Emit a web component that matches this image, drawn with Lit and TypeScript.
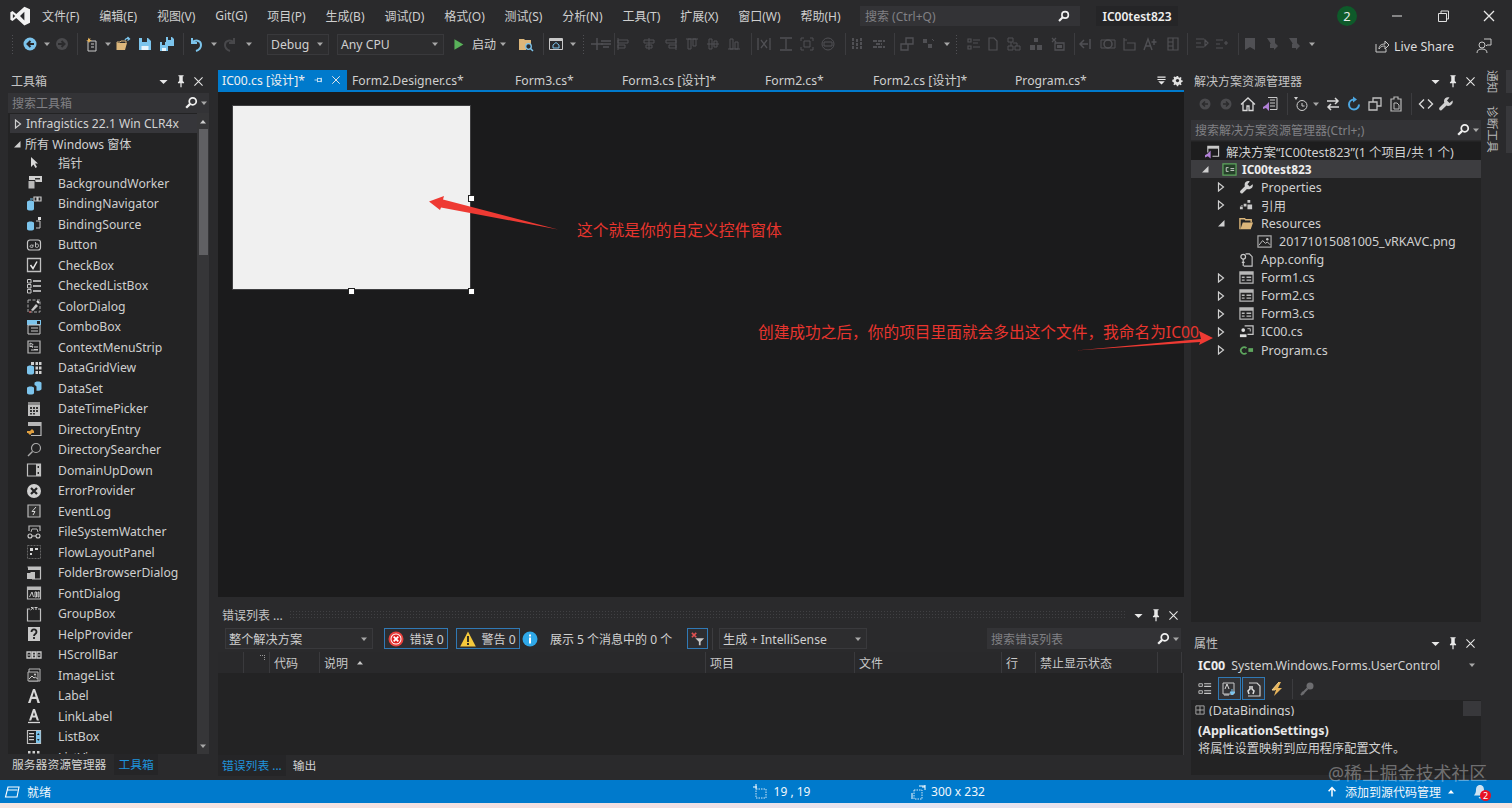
import { LitElement, html, css, svg } from "lit";
import { customElement } from "lit/decorators.js";

const G = "#c8c8c8";
const D = "#505054";
const B = "#7cc4ec";
const icons: Record<string, any> = {
  logo: svg`<path fill-rule="evenodd" fill="#f2f2f2" d="M11.5.5 16 2.6v10.8L11.5 15.5 5 9.6 2 12 .3 11V5l1.7-1 3 2.400zM11.500 4.500 8 8l3.500 3.500zM2.300 6.300v3.400L4.200 8z"/>`,
  back: svg`<circle cx="8" cy="8" r="6.500" fill="${B}"/><path d="M12 8H6M8.500 5 5.500 8l3 3" stroke="#26262a" stroke-width="2" fill="none"/>`,
  fwd: svg`<circle cx="8" cy="8" r="6" fill="#4a4a4d"/><path d="M4 8h6M7.500 5l3 3-3 3" stroke="#2b2b2d" stroke-width="2" fill="none"/>`,
  newp: svg`<path d="M4 5h8v10H4z" fill="none" stroke="${G}"/><path d="M4 1.500 5 3l1.500-1L6 4 8 4.500 6 5 5 7 4 5 2 4.500 4 4z" fill="#e8b45a"/><path d="M7 8h3M7 11h3" stroke="${G}"/>`,
  open: svg`<path d="M1 7h10l-2 7H1z" fill="#dcb67a"/><path d="M1 14V6h3l1-1h5v2" fill="none" stroke="#dcb67a"/><path d="M9 4c1-2 3-2 4-1M11.500 1 13.500 3l-2 1.500" stroke="${B}" stroke-width="1.300" fill="none"/>`,
  save: svg`<path d="M2 2h9l3 3v9H2z" fill="${B}"/><path d="M5 2h5v4H5z" fill="#2b2b2d"/><path d="M4.500 10h7v4h-7z" fill="#e8f4fb"/>`,
  saveall: svg`<path d="M7 1h6l2 2v7H7z" fill="${B}"/><path d="M9 1h3v3H9z" fill="#2b2b2d"/><path d="M1 6h6l2 2v7H1z" fill="${B}"/><path d="M3 6h3v3H3z" fill="#2b2b2d"/><path d="M3 12h4v3H3z" fill="#e8f4fb"/>`,
  undo: svg`<path d="M4 2v5h5M4.500 6.500C7 3.500 13 4 13 9c0 3-2 5-5 6" fill="none" stroke="${B}" stroke-width="2"/>`,
  redo: svg`<path d="M12 2v5H7M11.500 6.500C9 3.500 3 4 3 9c0 3 2 5 5 6" fill="none" stroke="#48484b" stroke-width="2"/>`,
  play: svg`<path d="M3 1.500 14 8 3 14.500z" fill="#59b25a"/>`,
  folderfind: svg`<path d="M1 3h5l1 1h6v6H8v4H1z" fill="#dcb67a"/><circle cx="10.500" cy="10.500" r="2.800" fill="#2b2b2d" stroke="${B}" stroke-width="1.300"/><path d="m12.500 12.500 2.500 2.500" stroke="${B}" stroke-width="1.500"/>`,
  browser: svg`<path d="M1.500 2.500h13v11h-13z" fill="none" stroke="${G}"/><path d="M2 3h12v2H2z" fill="${G}"/><path d="M8 6.500 5 9v3h6V9z" fill="none" stroke="${B}"/>`,
  mag: svg`<circle cx="10" cy="6" r="4" fill="none" stroke="#f0f0f0" stroke-width="2"/><path d="M7 9 2.500 13.500" stroke="#f0f0f0" stroke-width="2.600"/>`,
  share: svg`<path d="M2 6v8h10v-3" fill="none" stroke="${G}"/><path d="M5 11c0-4 3-5 6-5V3l4 4-4 4V8c-2 0-4 0-6 3z" fill="none" stroke="${G}"/>`,
  feedback: svg`<circle cx="6" cy="7" r="3" fill="none" stroke="${G}"/><path d="M1 15c0-3 2-4 5-4s5 1 5 4" fill="none" stroke="${G}"/><path d="M8 1h7v6h-4l-1 1" fill="none" stroke="${G}"/>`,
  pin: svg`<path d="M5 1.500h6v1h-1v5.500l1.500 1.500v1H8.700V15h-1.400v-4.500H4.500v-1L6 8V2.500H5z" fill="#e8e8e8"/>`,
  pinh: svg`<path d="M2 8h4M6 5v6M6 6h5v4H6M11 5v6" fill="none" stroke="#e8f4fb"/>`,
  x: svg`<path d="m3 3 10 10M13 3 3 13" stroke="#e8e8e8" stroke-width="1.300" fill="none"/>`,
  down: svg`<path d="M3 6h10L8 11z" fill="#e8e8e8"/>`,
  gear: svg`<path d="M7 1h2l.5 2 1.700.700 1.800-1 1.300 1.300-1 1.800.7 1.700 2 .5v2l-2 .5-.7 1.700 1 1.800-1.300 1.300-1.800-1-1.700.7-.5 2H7l-.5-2-1.700-.7-1.800 1-1.300-1.300 1-1.800-.7-1.700-2-.5V7l2-.5.7-1.700-1-1.800L3 1.700l1.800 1 1.700-.7z" transform="translate(1.600 1.600) scale(.8)" fill="#e0e0e0"/><circle cx="8" cy="8" r="2" fill="#2b2b2d"/>`,
  listdown: svg`<path d="M3 3h10v1.500H3zM3 6h10v1.500H3zM4 9h8l-4 4z" fill="#e8e8e8"/>`,
  d0: svg`<path d="M8 2v12M2 8h12" fill="none" stroke="${D}" stroke-width="1.400"/>`,
  d00: svg`<path d="M3 5h10M3 8h10M5 11h6" fill="none" stroke="${D}" stroke-width="1.400"/>`,
  d1: svg`<path d="M3 2v12M3 4h10v3H3zM3 9h7v3H3z" fill="none" stroke="${D}"/>`,
  d2: svg`<path d="M8 2v12M3 4h10v3H3zM5 9h6v3H5z" fill="none" stroke="${D}"/>`,
  d3: svg`<path d="M13 2v12M3 4h10v3H3zM6 9h7v3H6z" fill="none" stroke="${D}"/>`,
  d4: svg`<path d="M2 3h12M4 3v10h3V3zM9 3v7h3V3z" fill="none" stroke="${D}"/>`,
  d5: svg`<path d="M2 8h12M4 3v10h3V3zM9 5v6h3V5z" fill="none" stroke="${D}"/>`,
  d6: svg`<path d="M2 13h12M4 3v10h3V3zM9 6v7h3V6z" fill="none" stroke="${D}"/>`,
  d7: svg`<path d="M2 2v12M14 2v12M5 4l6 8M11 4l-6 8" fill="none" stroke="${D}" stroke-width="1.300"/>`,
  d8: svg`<path d="M2 2h12M2 14h12M8 3v10" fill="none" stroke="${D}" stroke-width="1.300"/>`,
  d9: svg`<path d="M2 2h3M11 2h3M2 14h3M11 14h3M2 2v3M14 2v3M2 11v3M14 11v3M5 5h6v6H5z" fill="none" stroke="${D}"/>`,
  d10: svg`<circle cx="8" cy="8" r="6" fill="none" stroke="${D}"/><path d="M4 6h8v4H4z" fill="none" stroke="${D}"/>`,
  d11: svg`<path d="M4 2v12M12 2v12M8 3v10" fill="none" stroke="${D}" stroke-width="2" stroke-dasharray="3 1"/>`,
  d12: svg`<path d="M2 5h12M2 11h12M5 8h6" fill="none" stroke="${D}" stroke-width="2" stroke-dasharray="4 1"/>`,
  d13: svg`<path d="M2 8h7v6H2zM7 2h7v6H7z" fill="none" stroke="${D}" stroke-width="1.400"/>`,
  d14: svg`<path d="M3 3h4v4H3zM8 8h4v4H8z" fill="${D}"/><path d="M12 3l2 2" stroke="${D}"/>`,
  d15: svg`<path d="M2 3h3v3H2zM2 10h3v3H2zM7 4h7M7 11h7M7 7h5" fill="none" stroke="${D}" stroke-width="1.200"/>`,
  d16: svg`<path d="M4 2h5l3 3v9H4z" fill="none" stroke="${D}" stroke-width="1.200"/>`,
  d17: svg`<path d="M2 2h5v4H2zM9 10h5v4H9zM2 10h5v4H2zM5 6v4M11 10V7H7" fill="none" stroke="${D}"/>`,
  d18: svg`<path d="M2 9h5v5H2zM9 9h5v5H9zM6 2h4v4H6z" fill="${D}"/>`,
  d19: svg`<path d="M2 2l4 4M6 2 2 6M5 7h9v7H5z" fill="none" stroke="${D}" stroke-width="1.300"/><path d="M7 9h5v3H7z" fill="${D}"/>`,
  d20: svg`<path d="M2 8h8M6 4 2 8l4 4M12 3v10" fill="none" stroke="${D}" stroke-width="1.500"/>`,
  d21: svg`<circle cx="8" cy="8" r="4" fill="none" stroke="${D}" stroke-width="1.500"/><path d="M1 4h14v8H1z" fill="none" stroke="${D}"/>`,
  d22: svg`<path d="M3 2v12h11V7H6M3 4h3" fill="none" stroke="${D}" stroke-width="1.200"/>`,
  d23: svg`<path d="M1 14 5 3l4 11M3 10h4" fill="none" stroke="${D}" stroke-width="1.400"/><path d="M11 3v6M8.500 6h5" stroke="${D}" stroke-width="1.400"/>`,
  d24: svg`<path d="M3 2h10v12H3zM8 2v12M3 6h5M3 10h5" fill="none" stroke="${D}" stroke-width="1.200"/>`,
  d25: svg`<path d="M2 3h8M2 7h5M2 11h8M11 4l3 3-3 3z" fill="none" stroke="${D}" stroke-width="1.200"/>`,
  d26: svg`<path d="M2 4h7M2 8h4M2 12h7M10 7h4M12 5v4" fill="none" stroke="${D}" stroke-width="1.200"/>`,
  d27: svg`<path d="M3 2h10v12l-5-3-5 3z" fill="${D}"/>`,
  d28: svg`<path d="M2 2h8v6l-2-1-2 1M9 6l4 4-4 4v-2H5V8" fill="${D}"/>`,
  sback: svg`<circle cx="8" cy="8" r="5.500" fill="#4a4a4d"/><path d="M11 8H6M8 5.500 5.500 8 8 10.500" stroke="#2b2b2d" stroke-width="1.500" fill="none"/>`,
  sfwd: svg`<circle cx="8" cy="8" r="5.500" fill="#4a4a4d"/><path d="M5 8h5M8 5.500l2.500 2.500L8 10.500" stroke="#2b2b2d" stroke-width="1.500" fill="none"/>`,
  home: svg`<path d="M1 8.500 8 2l7 6.500M3 7v7.500h4V10h2v4.500h4V7" fill="none" stroke="#d8d8d8" stroke-width="1.300"/>`,
  vsdoc: svg`<path d="M6 1.500h9v12H8" fill="none" stroke="${G}"/><path d="M8 4h5M8 7h5M8 10h5" stroke="${G}"/><path d="M1 11l3-2 3-3v9l-3-3-3 1z" fill="#b180d7"/>`,
  clock: svg`<circle cx="9" cy="9.500" r="5" fill="none" stroke="#d0d0d0"/><path d="M9 7v3h2.500" fill="none" stroke="#d0d0d0"/><path d="M1 1h4L3 4z" fill="#d0d0d0"/>`,
  sync: svg`<path d="M2 5h11M10 2l3 3-3 3M14 11H3M6 8l-3 3 3 3" fill="none" stroke="#d8d8d8" stroke-width="1.500"/>`,
  refresh: svg`<path d="M13 8.500A5 5 0 1 1 8 3.500" fill="none" stroke="#4da6e0" stroke-width="2"/><path d="M7 .5v6l4-3z" fill="#4da6e0"/>`,
  collapse: svg`<path d="M2 6h8v8H2z" fill="none" stroke="#c0c0c0" stroke-width="1.300"/><path d="M6 6V2h8v8h-4" fill="none" stroke="#c0c0c0" stroke-width="1.300"/>`,
  pending: svg`<path d="M3 3h3V1h4v2h3v12H3z" fill="none" stroke="#b8b8b8" stroke-width="1.200"/><path d="M6 7h3l2 2v4H6z" fill="none" stroke="#b8b8b8"/>`,
  code: svg`<path d="M6 3.500 1.500 8 6 12.500M10 3.500 14.500 8 10 12.500" fill="none" stroke="#d8d8d8" stroke-width="1.400"/>`,
  wrench: svg`<path d="M14.500 4.500 11.500 7 9 4.500l2.500-3C9 .5 6 2 6 5c0 .7.100 1.200.3 1.700L1.500 11.500c-1 1 0 3 1.500 3l.5-.2 5-4.700c.5.200 1 .3 1.500.3 3.500 0 5.500-3 4.500-5.400z" fill="#d0d0d0"/>`,
  sol: svg`<path d="M3 9V2.500h11.500V13H8" fill="none" stroke="${G}" stroke-width="1.200"/><path d="M3 3h11v2H3z" fill="${G}"/><path d="M0 12l3-2 3-3v8.500l-3-2.500-3 1.500z" fill="#b180d7"/>`,
  csproj: svg`<path d="M1 2h14v12H1z" fill="#26402a" stroke="#5ea65e" stroke-width="1.300"/><path d="M7 6H4.500v4H7" fill="none" stroke="#d0d0d0"/><path d="M9 7h4M9 9h4" stroke="#d0d0d0"/>`,
  refs: svg`<path d="M9 2h3v3H9zM5 6h3v3H5zM9 7h5v5H9zM1 9h3v3H1z" fill="#c8c8c8"/><path d="M2 8h2" stroke="#888"/>`,
  folderopen: svg`<path d="M1 14V3h5l1 1h6v3" fill="none" stroke="#dcb67a" stroke-width="1.500"/><path d="M1.500 14 4 7h11l-2.500 7z" fill="#dcb67a"/>`,
  img: svg`<path d="M1 2h14v12H1z" fill="none" stroke="#a8a8a8" stroke-width="1.300"/><circle cx="11" cy="5.500" r="1.300" fill="#c8c8c8"/><path d="m2 12 4-5 3 3 2-1.500 3 3" fill="none" stroke="#c8c8c8"/>`,
  config: svg`<path d="M7 2h4l3 3v10H5" fill="none" stroke="#c8c8c8" stroke-width="1.200"/><circle cx="4.500" cy="5" r="2.500" fill="none" stroke="#c8c8c8" stroke-width="1.300"/><path d="M4.500 7.500V15M3 11h3" stroke="#c8c8c8" stroke-width="1.300"/>`,
  form: svg`<path d="M1 2h14v12H1z" fill="none" stroke="#b8b8b8" stroke-width="1.300"/><path d="M1 2h14v3H1zM3 7h3v1.500H3zM3 10h3v1.500H3zM8 7h5v1.500H8zM8 10h5v1.500H8z" fill="#b8b8b8"/>`,
  uc: svg`<path d="M6 2h9v9H9" fill="none" stroke="#c8c8c8" stroke-width="1.300"/><circle cx="4.500" cy="6.500" r="2" fill="#e0e0e0"/><path d="M1 14v-3h7v3z" fill="#e0e0e0"/><path d="M9 5h3v3" fill="none" stroke="#c8c8c8"/>`,
  csfile: svg`<path d="M8 5.500a3.500 3.500 0 1 0 0 5" fill="none" stroke="#5ea65e" stroke-width="1.800"/><path d="M10 5.500h5v4h-5z" fill="#5ea65e"/>`,
  tpointer: svg`<path d="M5 2v10l2.500-2.500L9.500 13l1.500-1-2-3.500H12z" fill="#d8d8d8"/>`,
  tbg: svg`<path d="M3 1h13v6H3z" fill="#d0d0d0"/><path d="M9 3h5v1.500H9z" fill="#333"/><path d="M2 5.500h7V14H2z" fill="#b8b8b8" stroke="#232324"/>`,
  tbn: svg`<path d="M8 1h3v4H8zM12 1h3v4h-3z" fill="none" stroke="#c8c8c8" stroke-width="1.200"/><path d="M1 6c0-2 7-2 7 0v7c0 2-7 2-7 0z" fill="${B}"/><path d="M4 3h3" stroke="${B}"/>`,
  tbs: svg`<path d="M12 1h3v3h-3z" fill="#e0e0e0"/><path d="M10 5h4v7h-4" fill="none" stroke="#c8c8c8"/><path d="M1 7c0-2 7-2 7 0v6c0 2-7 2-7 0z" fill="${B}"/>`,
  tbtn: svg`<rect x="1.500" y="3" width="13" height="10" rx="2.500" fill="none" stroke="#c8c8c8" stroke-width="1.200"/><path d="M4 9.500c0-2 3-2 3 0v-2M7 10c-1 .5-3 .5-3-.5M9.500 5v5c2 1 3 0 3-1.500S10.500 6 9.500 8" fill="none" stroke="#c8c8c8" stroke-width=".9"/>`,
  tcheck: svg`<path d="M1.500 1.500h13v13h-13z" fill="none" stroke="#c0c0c0" stroke-width="1.300"/><path d="m4.500 8 2.500 3.500 4-7" fill="none" stroke="#e8e8e8" stroke-width="1.500"/>`,
  tclb: svg`<path d="M1.500 1.500h3.500v3.500H1.500zM1.500 6.500h3.500v3.500H1.500zM1.500 11.500h3.500V15H1.500z" fill="none" stroke="#c8c8c8"/><path d="M7 3h8M7 8h8M7 13h8" stroke="#d8d8d8" stroke-width="1.500"/>`,
  tcolor: svg`<path d="M2 2h12v12H2z" fill="none" stroke="#aaa" stroke-dasharray="3 1.500"/><path d="m5 12 5-6 2 2-5 5z" fill="#c8c8c8"/><path d="M11 3l2 2" stroke="#e8e8e8" stroke-width="2"/><path d="M3 14h2" stroke="#e05050"/>`,
  tcombo: svg`<path d="M1 1h14v5H1z" fill="${B}"/><path d="M11 2h3v3h-3z" fill="#232324"/><path d="M2 6h12v9H2z" fill="none" stroke="#c8c8c8"/><path d="M5 9h7M5 12h7" stroke="#c8c8c8"/>`,
  tctx: svg`<path d="M2 2h12v12H2z" fill="none" stroke="#b8b8b8" stroke-width="1.200"/><path d="M4 4v4l1-1 1.500 1.500 .5-.5L6 6.500l1-1zM8 8h4M8 10.500h4M5 11h7" fill="none" stroke="#c8c8c8"/>`,
  tdgv: svg`<path d="M1 7c0-2 7-2 7 0v6c0 2-7 2-7 0z" fill="${B}"/><path d="M5 2h3v3H5zM9.500 2h2.500v3H9.500zM13 2h2.500v3H13zM9.500 6.500h2.500v3H9.500zM13 6.500h2.500v3H13zM9.500 11h2.500v3H9.500zM13 11h2.500v3H13z" fill="#d0d0d0"/>`,
  tds: svg`<path d="M1 8c0-2 7-2 7 0v5c0 2-7 2-7 0z" fill="${B}"/><path d="M8.500 3c0-2 7-2 7 0v6c0 1.500-3 2-5 1.700V7c0-1-1-1.500-2-2z" fill="${B}"/>`,
  tdate: svg`<path d="M2 1h12v14H2z" fill="#c0c0c0"/><path d="M2 1h12v3H2z" fill="#888"/><path d="M4 6h2v2H4zM7 6h2v2H7zM10 6h2v2h-2zM4 9h2v2H4zM7 9h2v2H7zM10 9h2v2h-2zM4 12h2v1.500H4zM7 12h2v1.500H7z" fill="#333"/>`,
  tdir: svg`<path d="M2 1.500h13v13H5" fill="none" stroke="#b8b8b8" stroke-width="1.200"/><path d="M2 2h13v3H2z" fill="#b8b8b8"/><path d="M1 10h3l2-2 2 2v2H6l-2 2-2-2H1z" fill="#e0a040"/>`,
  tsearch: svg`<circle cx="10" cy="6" r="4.500" fill="none" stroke="#aaa" stroke-width="1.200"/><path d="M6.500 9.500 2 14" stroke="#aaa" stroke-width="1.500"/>`,
  tud: svg`<path d="M1.500 2h13v12h-13z" fill="none" stroke="#c0c0c0" stroke-width="1.200"/><path d="M10 2h4.500v12H10z" fill="#c0c0c0"/><path d="M12.300 4v2M12.300 10v2" stroke="#222" stroke-width="1.400"/>`,
  terr: svg`<circle cx="8" cy="8" r="7" fill="#d0d0d0"/><path d="m5 5 6 6M11 5l-6 6" stroke="#232324" stroke-width="2.200"/>`,
  tevt: svg`<path d="M2 2h12v12H2z" fill="#333" stroke="#b8b8b8" stroke-width="1.200"/><path d="M10 4 6 8.500h3L7 12" fill="none" stroke="#d8d8d8"/>`,
  tfsw: svg`<path d="M3 7V2h11v5" fill="none" stroke="#b8b8b8" stroke-width="1.200"/><path d="M5 8 6 5h5l1 3" fill="none" stroke="#b8b8b8"/><circle cx="4" cy="12" r="2" fill="none" stroke="#d0d0d0" stroke-width="1.100"/><circle cx="12" cy="12" r="2" fill="none" stroke="#d0d0d0" stroke-width="1.100"/><path d="M6 12h4" stroke="#d0d0d0"/>`,
  tflp: svg`<path d="M1.500 1.500h13v13h-13z" fill="none" stroke="#666" stroke-dasharray="2 1"/><path d="M4 4h3v3H4zM9 4h3v2H9zM4 9h2v2H4z" fill="#d8d8d8"/>`,
  tfbd: svg`<path d="M1.500 2h13v12H6" fill="none" stroke="#c0c0c0" stroke-width="1.200"/><path d="M2 2h13v3H2z" fill="#c0c0c0"/><path d="M1 8h3l1-1h4v7H1z" fill="#c0c0c0"/>`,
  tfont: svg`<path d="M1.500 2h13v12h-13z" fill="none" stroke="#b8b8b8" stroke-width="1.200"/><path d="M2 2h12v3H2z" fill="#b8b8b8"/><path d="m3.500 12 2.500-5 1.500 5M9 7h1.500v5H9zM12 7h1v5h-1z" fill="none" stroke="#c8c8c8"/>`,
  tgrp: svg`<path d="M4 3H1.500v12h13V3H12" fill="none" stroke="#c0c0c0" stroke-width="1.200"/><path d="M5 1.500h1.500l1 2M7.500 1.500l-3 2.500M8.500 1.500h3M10 1.500V4" stroke="#d0d0d0" fill="none"/>`,
  thelp: svg`<path d="M2 1h12v14H2z" fill="#c8c8c8"/><path d="M5.500 6c0-3.500 5-3.500 5 0 0 2-2.500 2-2.500 4M8 11v2" fill="none" stroke="#232324" stroke-width="1.800"/>`,
  thsb: svg`<path d="M1 5h4v6H1zM6.500 5h3v6h-3zM11 5h4v6h-4z" fill="none" stroke="#c8c8c8" stroke-width="1.300"/><path d="M2.500 7h1v2h-1zM12.500 7h1v2h-1zM7.500 7h1v2h-1z" fill="#c8c8c8"/>`,
  timgl: svg`<path d="M3 2h11v12H3z" fill="none" stroke="#b8b8b8"/><path d="M2 5h10v9H2z" fill="#333" stroke="#b8b8b8"/><path d="m3 12 3-3 2 2 1.500-1 2 2" fill="none" stroke="#d0d0d0"/><circle cx="9" cy="7.500" r="1" fill="#d0d0d0"/>`,
  tlabel: svg`<path d="M2 15 7 1h2l5 14h-2.500l-1.200-4H5.700l-1.200 4zM6.400 8.800h3.200L8 3.700z" fill="#d8d8d8" fill-rule="evenodd"/>`,
  tlink: svg`<path d="M3 12.500 7 1h2l4 11.500h-2.200l-1-3H6.200l-1 3zM6.900 7.500h2.200L8 4z" fill="#d8d8d8" fill-rule="evenodd"/><path d="M2 14.500h12" stroke="#d8d8d8" stroke-width="1.300"/>`,
  tlist: svg`<path d="M1.500 1.500h13v13h-13z" fill="none" stroke="#c0c0c0" stroke-width="1.200"/><path d="M3 4h5v1.200H3zM3 7h5v1.200H3zM3 10h5v1.200H3z" fill="#d0d0d0"/><path d="M10 2h4.500v12H10z" fill="${B}"/><path d="m11 6 1.300-2 1.300 2zM11 10l1.300 2 1.300-2z" fill="#222"/>`,
  tlv: svg`<path d="M2 2h2.500v2.500H2zM6.500 2H9v2.500H6.500zM11 2h2.500v2.500H11z" fill="#d0d0d0"/>`,
  ierr: svg`<circle cx="8" cy="8" r="7.500" fill="#e8403c"/><circle cx="8" cy="8" r="5.500" fill="#fff"/><circle cx="8" cy="8" r="4.500" fill="#e01f1f"/><path d="m5.700 5.700 4.600 4.600M10.300 5.700l-4.600 4.600" stroke="#fff" stroke-width="1.800"/>`,
  iwarn: svg`<path d="M8 .5 15.800 15.500H.2z" fill="#f5c93c"/><path d="M8 5v6M8 12v2" stroke="#222" stroke-width="1.800"/>`,
  iinfo: svg`<circle cx="8" cy="8" r="7.500" fill="#2fa8e8"/><path d="M8 6.500v6M8 3.500v2" stroke="#fff" stroke-width="2"/>`,
  ifilter: svg`<path d="M5 7h10l-4 4v4H9v-4z" fill="#c8c8c8"/><path d="m1 1 5 5M6 1 1 6" stroke="#e05050" stroke-width="1.800"/>`,
  pcat: svg`<path d="M1 2h4v3H1zM1 10h4v3H1z" fill="none" stroke="#c8c8c8"/><path d="M7 2h8M7 5h8M7 10h8M7 13h8" stroke="#c8c8c8" stroke-width="1.300"/>`,
  paz: svg`<path d="M2 2h11v11H2z" fill="none" stroke="#c8c8c8"/><path d="m4 8 2-5 2 5M3 14h5" fill="none" stroke="#d8d8d8"/><path d="M11 8v5M9 11l2 3 3-3z" fill="${B}" stroke="${B}"/>`,
  pprop: svg`<path d="M4 2h8l3 3v10H3" fill="none" stroke="#d0d0d0" stroke-width="1.200"/><path d="M5 5v3l-2 2 1 3M7 5v3l2 2-1 3" fill="none" stroke="#e0e0e0" stroke-width="1.500"/>`,
  pevt: svg`<path d="M10 1 3 9h4l-2 6 8-8H9l3-6z" fill="#e8b45a"/><path d="M10 1 3 9h3" fill="none" stroke="#f0d090"/>`,
  pkey: svg`<circle cx="11" cy="5" r="3.500" fill="#6d6d70"/><path d="M8.500 7.500 2 14M3 11l2 2" stroke="#6d6d70" stroke-width="2.200"/>`,
  plus: svg`<path d="M2.500 2.500h11v11h-11zM8 3v10M3 8h10" fill="none" stroke="#c8c8c8"/>`,
  sready: svg`<path d="M4 3h11l-2 10H1.500zM3.500 6h10" fill="none" stroke="#fff" stroke-width="1.100"/>`,
  spos: svg`<path d="M3 5h10v9H3z" fill="none" stroke="#cfe6f5" stroke-dasharray="1.500 1"/><path d="M3 0v5M0 3h4" stroke="#fff"/>`,
  ssize: svg`<path d="M3 6h8v9H3z" fill="none" stroke="#cfe6f5" stroke-dasharray="1.500 1"/><path d="M8 2h6M14 1v5M11 3h3M1 9v6" stroke="#fff"/>`,
  sup: svg`<path d="M8 2v12M3.500 7 8 2l4.500 5" fill="none" stroke="#fff" stroke-width="2"/>`,
  bell: svg`<path d="M8 1c3 0 4 2.500 4 5s1 4 2 5.500H2C3 10 4 8.500 4 6s1-5 4-5zM6.500 13h3L8 15z" fill="#cfe3f2"/>`,
};

const ic = (n: string, s = 16) => html`<svg class="ic" viewBox="0 0 16 16" width=${s} height=${s}>${icons[n]}</svg>`;

const tri = (open = false, color = "#cfcfcf") =>
  open
    ? html`<svg class="ic" viewBox="0 0 10 10" width="10" height="10"><path d="M8.500 2v6.500H2z" fill=${color}/></svg>`
    : html`<svg class="ic" viewBox="0 0 10 10" width="10" height="10"><path d="M2.500 1v8L7.500 5z" fill="none" stroke=${color} stroke-width="1.200"/></svg>`;

const caret = () => html`<svg class="ic" viewBox="0 0 8 8" width="8" height="8"><path d="M1 2.500h6L4 6z" fill="#a8a8a8"/></svg>`;
const caretUp = (c = "#d0d0d0") => html`<svg class="ic" viewBox="0 0 8 8" width="8" height="8"><path d="M1 5.500h6L4 2z" fill=${c}/></svg>`;

const grip = () => html`<span class="grip"></span>`;

type TB = { x: number; w?: number; c: any };
function strip(items: TB[], origin = 0) {
  let end = origin;
  return items.map((it) => {
    const w = it.w ?? 16;
    const left = it.x - w / 2;
    const m = left - end;
    end = left + w;
    return html`<span class="slot" style="margin-left:${m}px;width:${w}px">${it.c}</span>`;
  });
}
const sep = (x: number): TB => ({ x, w: 1, c: html`<span class="sep"></span>` });
const car = (x: number): TB => ({ x, w: 8, c: caret() });
const di = (x: number, n: string): TB => ({ x, c: ic(n) });

const menus = ["文件(F)", "编辑(E)", "视图(V)", "Git(G)", "项目(P)", "生成(B)", "调试(D)", "格式(O)", "测试(S)", "分析(N)", "工具(T)", "扩展(X)", "窗口(W)", "帮助(H)"];

const tools: [string, string][] = [
  ["tpointer", "指针"], ["tbg", "BackgroundWorker"], ["tbn", "BindingNavigator"], ["tbs", "BindingSource"], ["tbtn", "Button"], ["tcheck", "CheckBox"], ["tclb", "CheckedListBox"], ["tcolor", "ColorDialog"], ["tcombo", "ComboBox"], ["tctx", "ContextMenuStrip"], ["tdgv", "DataGridView"], ["tds", "DataSet"], ["tdate", "DateTimePicker"], ["tdir", "DirectoryEntry"], ["tsearch", "DirectorySearcher"], ["tud", "DomainUpDown"], ["terr", "ErrorProvider"], ["tevt", "EventLog"], ["tfsw", "FileSystemWatcher"], ["tflp", "FlowLayoutPanel"], ["tfbd", "FolderBrowserDialog"], ["tfont", "FontDialog"], ["tgrp", "GroupBox"], ["thelp", "HelpProvider"], ["thsb", "HScrollBar"], ["timgl", "ImageList"], ["tlabel", "Label"], ["tlink", "LinkLabel"], ["tlist", "ListBox"], ["tlv", "ListView"],
];

const tabs = [
  { t: "Form2.Designer.cs*", w: 163 },
  { t: "Form3.cs*", w: 107 },
  { t: "Form3.cs [设计]*", w: 143 },
  { t: "Form2.cs*", w: 108 },
  { t: "Form2.cs [设计]*", w: 142 },
  { t: "Program.cs*", w: 130 },
];

const tree = [
  { i: "sol", t: "解决方案“IC00test823”(1 个项目/共 1 个)", x: 14, tx: 6, cls: "sol" },
  { i: "csproj", t: "IC00test823", x: 31, tx: 5, arrow: "open", ax: 9, cls: "proj" },
  { i: "wrench", t: "Properties", x: 48, arrow: "closed", ax: 25 },
  { i: "refs", t: "引用", x: 48, arrow: "closed", ax: 25 },
  { i: "folderopen", t: "Resources", x: 48, arrow: "open", ax: 25 },
  { i: "img", t: "20171015081005_vRKAVC.png", x: 66 },
  { i: "config", t: "App.config", x: 48 },
  { i: "form", t: "Form1.cs", x: 48, arrow: "closed", ax: 25 },
  { i: "form", t: "Form2.cs", x: 48, arrow: "closed", ax: 25 },
  { i: "form", t: "Form3.cs", x: 48, arrow: "closed", ax: 25 },
  { i: "uc", t: "IC00.cs", x: 48, arrow: "closed", ax: 25 },
  { i: "csfile", t: "Program.cs", x: 48, arrow: "closed", ax: 25 },
];

const cols = [
  { t: "", w: 26 }, { t: "", w: 26, mark: true }, { t: "代码", w: 50 }, { t: "说明", w: 386, sort: true }, { t: "项目", w: 149 }, { t: "文件", w: 147 }, { t: "行", w: 34 }, { t: "禁止显示状态", w: 122 }, { t: "", w: 24 },
];

const panelHead = (title: string) => html`
  <div class="phead">
    <span class="ptitle">${title}</span>
    <span class="pbtns">${ic("down", 13)}${ic("pin", 14)}${ic("x", 13)}</span>
  </div>`;

@customElement("app-root")
export class AppRoot extends LitElement {
  static styles = css`
    :host { display: block; width: 1512px; height: 808px; overflow: hidden; font-family: "Noto Sans", "Noto Sans CJK SC", sans-serif; font-size: 12.2px; color: #d2d2d2; background: #2a2a2c; }
    * { box-sizing: border-box; }
    .ic { display: block; flex: none; }
    .app { display: flex; flex-direction: column; height: 808px; position: relative; }
    .title { height: 32px; display: flex; align-items: center; flex: none; position: relative; }
    .logo { margin-left: 10px; width: 32px; flex: none; }
    .menus { display: flex; gap: 19.85px; font-size: 12px; white-space: nowrap; width: 818px; flex: none; color: #cfcfcf; }
    .qs { width: 220px; height: 20px; background: #333336; display: flex; align-items: center; justify-content: space-between; padding: 0 10px 0 5px; color: #808084; flex: none; font-size: 12px; }
    .sname { margin-left: 16px; width: 82px; height: 20px; font-weight: 600; font-size: 12px; color: #f0f0f0; background: #252527; display: flex; align-items: center; justify-content: center; flex: none; white-space: nowrap; }
    .badge { margin-left: 159px; width: 20px; height: 20px; border-radius: 50%; background: #0e5a2a; color: #e8e8e8; display: flex; align-items: center; justify-content: center; font-size: 13px; flex: none; }
    .win { display: flex; margin-left: 32px; gap: 30px; }
    .tb { height: 30px; padding-bottom: 6px; display: flex; align-items: center; flex: none; position: relative; }
    .tb.sub { height: 29px; padding-bottom: 3px; }
    .slot { display: flex; align-items: center; justify-content: center; flex: none; height: 24px; white-space: nowrap; }
    .low { margin-top: 4px; display: block; }
    .sep { width: 1px; height: 22px; background: #3c3c3f; }
    .grip { width: 4px; height: 20px; background-image: radial-gradient(#505054 .7px, transparent .8px); background-size: 3px 3px; display: block; }
    .combo { display: flex; align-items: center; justify-content: space-between; width: 100%; height: 21px; padding: 0 4px 0 3px; border: 1px solid #39393c; background: #2d2d2f; font-size: 12.2px; color: #d0d0d0; }
    .main { flex: 1; display: flex; padding: 8px 0 5px 8px; position: relative; min-height: 0; }
    .left { width: 201px; margin-top: 1px; display: flex; flex-direction: column; flex: none; }
    .center { width: 966px; margin-left: 9px; display: flex; flex-direction: column; flex: none; }
    .right { width: 290px; margin-left: 7px; margin-top: 1px; display: flex; flex-direction: column; gap: 11px; flex: none; }
    .phead { height: 20px; display: flex; align-items: center; justify-content: space-between; padding: 0 4px 0 3px; flex: none; font-size: 12px; color: #c4c4c4; }
    .pbtns { display: flex; align-items: center; gap: 4px; }
    .search { height: 20px; background: #333336; display: flex; align-items: center; justify-content: space-between; padding: 0 1px 0 4px; color: #808084; font-size: 12px; flex: none; }
    .search .sb { display: flex; align-items: center; gap: 2px; }
    .left .search { margin-top: 2px; }
    .box { flex: 1; min-height: 0; display: flex; background: #232324; overflow: hidden; }
    .list { flex: 1; overflow: hidden; }
    .cat { height: 19.5px; padding-top: 2px; display: flex; align-items: center; gap: 3px; padding-left: 4px; white-space: nowrap; font-size: 12.1px; }
    .cat.on { background: #36363a; margin: 1px 0 0 2px; height: 19px; padding: 0 0 0 3px; }
    .item { height: 20.5px; display: flex; align-items: center; padding-left: 18px; gap: 16px; font-size: 12.2px; white-space: nowrap; color: #cfcfcf; }
    .scroll { width: 12px; background: #363638; display: flex; flex-direction: column; align-items: center; padding: 5px 0 4px; flex: none; }
    .thumb { width: 9px; height: 126px; background: #606063; margin-top: 3px; }
    .scroll .fill { flex: 1; }
    .btabs { height: 21px; display: flex; align-items: center; font-size: 11.8px; flex: none; white-space: nowrap; padding-bottom: 2px; }
    .btabs .active { color: #1f94dc; background: #252527; height: 21px; margin-bottom: -2px; padding: 0 4px 2px; display: flex; align-items: center; }
    .btabs .srv { padding: 0 8px 0 4px; }
    .btabs .out { padding-left: 7px; }
    .dtabs { height: 20px; display: flex; flex: none; font-size: 12.2px; white-space: nowrap; }
    .dtab { display: flex; align-items: center; padding-left: 5px; flex: none; color: #cfcfcf; }
    .dtab.on { width: 129px; background: #007acc; color: #f0f0f0; padding-left: 4px; position: relative; }
    .dtab.on .tt { width: 91px; }
    .dtab.on .tb2 { display: flex; gap: 5px; align-items: center; }
    .dend { margin-left: auto; display: flex; align-items: center; gap: 3px; padding-right: 0; }
    .dline { height: 2px; background: #007acc; flex: none; }
    .design { flex: 1; background: #1b1b1c; padding: 13px 0 0 14px; min-height: 0; position: relative; }
    .form { width: 239px; height: 185px; background: #f0f0f0; border: 1px solid #3f3f41; position: relative; }
    .h { position: absolute; width: 7px; height: 7px; background: #fff; border: 1px solid #222; }
    .h.r { left: 234.5px; top: 88.5px; }
    .h.b { left: 115px; top: 181.5px; }
    .h.rb { left: 234.5px; top: 181.5px; }
    .errs { height: 170px; margin-top: 8px; display: flex; flex-direction: column; flex: none; }
    .ehead { height: 20px; display: flex; align-items: center; padding: 0 4px 0 4px; font-size: 12px; flex: none; color: #c4c4c4; }
    .dots { flex: 1; height: 10px; margin: 0 6px; background-image: radial-gradient(#404043 .6px, transparent .7px); background-size: 3px 3px; }
    .ebar { height: 27px; flex: none; display: flex; align-items: center; }
    .btn { display: flex; align-items: center; justify-content: center; gap: 5px; height: 21px; width: 100%; border: 1px solid #3079b5; background: #2d2d30; font-size: 12.1px; }
    .info { display: flex; gap: 12px; align-items: center; font-size: 12px; width: 100%; }
    .ehdr { height: 21px; display: flex; flex: none; background: #29292b; font-size: 12px; }
    .col { display: flex; align-items: center; gap: 8px; padding-left: 4px; border-right: 1px solid #3a3a3d; flex: none; color: #c8c8c8; }
    .col .mk { margin-left: 12px; width: 5px; height: 5px; margin-top: -10px; border-top: 1px dotted #999; border-right: 1px dotted #999; }
    .ebody { flex: 1; background: #232324; border-right: 1px solid #3a3a3d; }
    .stree { flex: 1; background: #232324; padding-top: 1px; margin-top: 1px; min-height: 0; }
    .sp { flex: 1; display: flex; flex-direction: column; min-height: 0; }
    .row { height: 18.1px; display: flex; align-items: center; font-size: 12.5px; white-space: nowrap; color: #d0d0d0; }
    .row.sol { background: #1d1d1e; }
    .row.proj { background: #3d3d40; font-weight: 700; color: #ededed; font-size: 11.9px; }
    .aslot { display: flex; align-items: center; flex: none; height: 18px; }
    .props { height: 142px; flex: none; display: flex; flex-direction: column; }
    .pobj { height: 24px; display: flex; align-items: center; padding: 0 5px 0 7px; gap: 6px; font-size: 12.3px; flex: none; }
    .pobj b { font-size: 12.5px; color: #ededed; }
    .pobj .c { margin-left: auto; }
    .ptool { height: 23px; display: flex; align-items: center; flex: none; padding-left: 2.500px; gap: 1px; }
    .pt { width: 23px; height: 23px; display: flex; align-items: center; justify-content: center; flex: none; }
    .pt.sel { border: 1px solid #3079b5; background: #333336; }
    .psep { width: 1px; height: 20px; margin: 0 2px; background: #3c3c3f; flex: none; }
    .pgrid { height: 16px; flex: none; display: flex; align-items: flex-start; padding-left: 3px; gap: 3px; overflow: hidden; background: #232324; font-size: 12.3px; line-height: 22px; }
    .pgrid .ic { margin-top: 4px; }
    .pgrid .sq { margin-left: auto; width: 18px; height: 16px; margin-top: 1px; background: #38383b; border-bottom: 1px solid #aaa; flex: none; }
    .pdesc { flex: 1; background: #232324; padding: 6px 7px; font-size: 12.2px; line-height: 18px; }
    .pdesc b { display: block; font-size: 12.5px; color: #e8e8e8; }
    .vstrip { width: 31px; flex: none; display: flex; flex-direction: column; align-items: flex-end; gap: 13px; }
    .vt { display: block; writing-mode: vertical-rl; text-orientation: sideways; white-space: nowrap; font-size: 11.7px; color: #b8b8b8; width: 25px; padding-right: 12px; line-height: 14px; background: linear-gradient(to right, #2a2a2c 19px, #38383b 19px); }
    .status { height: 23px; background: #007acc; color: #f2f7fb; display: flex; align-items: center; flex: none; font-size: 12px; white-space: nowrap; }
    .bstrip { height: 5px; flex: none; background: linear-gradient(90deg, #f6e6e2, #f3dfe0 40%, #e2e4f2 60%, #efdfe4 85%, #f5e4e0); }
    .anno { position: absolute; color: #e8352e; white-space: nowrap; line-height: 20px; }
    .a1 { left: 577px; top: 158px; font-size: 15.75px; }
    .a2 { left: 758px; top: 260px; font-size: 15.7px; }
    .arrow { position: absolute; left: 0; top: 0; pointer-events: none; }
    .wm { position: absolute; left: 1328px; top: 761px; font-size: 17.9px; color: rgba(255,255,255,.36); white-space: nowrap; line-height: 24px; }
    .bellb { position: relative; display: block; width: 16px; height: 16px; }
    .bdg { position: absolute; left: 8px; top: 6px; width: 11px; height: 11px; border-radius: 50%; background: #e81123; color: #fff; font-size: 9px; line-height: 11px; text-align: center; }
    .ls { font-size: 12.5px; color: #dcdcdc; }
    .start { font-size: 12px; }
  `;

  render() {
    return html`
      <div class="app">
        ${this.renderTitle()}
        ${this.renderToolbar()}
        <div class="main">
          ${this.renderLeft()}
          ${this.renderCenter()}
          ${this.renderRight()}
          <div class="vstrip"><span class="vt">通知</span><span class="vt">诊断工具</span></div>
          <span class="anno a1">这个就是你的自定义控件窗体</span>
          <span class="anno a2">创建成功之后，你的项目里面就会多出这个文件，我命名为IC00</span>
          <svg class="arrow" width="1512" height="718" viewBox="0 62 1512 718">
            <path d="M558 229.500 441 207.500 440 210 429 201.500 444 196 443 199.500z" fill="#ee3a33"/>
            <path d="M1076 350.500 1201 339 1199 331 1213 338 1199 345 1200 342z" fill="#ee3a33"/>
          </svg>
        </div>
        ${this.renderStatus()}
        <div class="bstrip"></div>
        <span class="wm">@稀土掘金技术社区</span>
      </div>`;
  }

  renderTitle() {
    return html`<div class="title">
      <span class="logo">${ic("logo", 20)}</span>
      <div class="menus">${menus.map((m) => html`<span>${m}</span>`)}</div>
      <div class="qs"><span>搜索 (Ctrl+Q)</span>${ic("mag", 13)}</div>
      <div class="sname">IC00test823</div>
      <div class="badge">2</div>
      <div class="win">
        <svg class="ic" viewBox="0 0 16 16" width="16" height="16"><path d="M3 8h10" stroke="#e0e0e0"/></svg>
        <svg class="ic" viewBox="0 0 16 16" width="16" height="16"><path d="M3.500 5.500h8v8h-8zM6 5V3h7.500v8H12" fill="none" stroke="#e0e0e0"/></svg>
        ${ic("x", 16)}
      </div>
    </div>`;
  }

  renderToolbar() {
    const items: TB[] = [
      { x: 13, w: 4, c: grip() }, di(30, "back"), car(47), di(62, "fwd"), sep(77), di(92, "newp"), car(108), di(124, "open"), di(145, "save"), di(167, "saveall"), sep(183),
      di(196, "undo"), car(214), di(230, "redo"), car(249),
      { x: 298, w: 62, c: html`<span class="combo"><span>Debug</span>${caret()}</span>` },
      { x: 390.5, w: 107, c: html`<span class="combo"><span>Any CPU</span>${caret()}</span>` },
      { x: 458, w: 13, c: ic("play", 13) },
      { x: 484, w: 26, c: html`<span class="start">启动</span>` }, car(503),
      di(526, "folderfind"), sep(543), di(556, "browser"), car(573), { x: 584, w: 4, c: grip() },
      di(597, "d0"), di(605.5, "d00"), sep(614), di(623, "d1"), di(649, "d2"), di(671, "d3"), di(692, "d4"), di(713, "d5"), di(734, "d6"), sep(751),
      di(764, "d7"), di(786, "d8"), di(807, "d9"), di(828, "d10"), sep(845), di(857, "d11"), di(879, "d12"), sep(894), di(907, "d13"), di(928, "d14"), car(947), { x: 957, w: 4, c: grip() },
      di(974, "d15"), di(993, "d16"), di(1014, "d17"), di(1036, "d18"), di(1058, "d19"), sep(1074),
      di(1086, "d20"), di(1108, "d21"), di(1129, "d22"), di(1151, "d23"), di(1173, "d24"), sep(1187),
      di(1202, "d25"), di(1222, "d26"), sep(1238), di(1250, "d27"), di(1273, "d28"), di(1295, "d28"), { x: 1312, w: 8, c: caret() },
      { x: 1382, c: html`<span class="low">${ic("share")}</span>` },
      { x: 1424, w: 60, c: html`<span class="ls low">Live Share</span>` },
      { x: 1484, c: html`<span class="low">${ic("feedback")}</span>` },
    ];
    return html`<div class="tb">${strip(items)}</div>`;
  }

  renderLeft() {
    return html`<div class="left">
      ${panelHead("工具箱")}
      <div class="search"><span>搜索工具箱</span><span class="sb">${ic("mag", 14)}${caret()}</span></div>
      <div class="box">
        <div class="list">
          <div class="cat on">${tri(false)}<span>Infragistics 22.1 Win CLR4x</span></div>
          <div class="cat">${tri(true)}<span>所有 Windows 窗体</span></div>
          ${tools.map(([i, t]) => html`<div class="item">${ic(i)}<span>${t}</span></div>`)}
        </div>
        <div class="scroll">
          ${caretUp()}<span class="thumb"></span><span class="fill"></span>${caret()}
        </div>
      </div>
      <div class="btabs">
        <span class="srv">服务器资源管理器</span><span class="active">工具箱</span>
      </div>
    </div>`;
  }

  renderCenter() {
    const ebar: TB[] = [
      { x: 299, w: 148, c: html`<span class="combo"><span>整个解决方案</span>${caret()}</span>` },
      { x: 416, w: 64, c: html`<span class="btn">${ic("ierr")}<span>错误 0</span></span>` },
      { x: 488, w: 64, c: html`<span class="btn">${ic("iwarn")}<span>警告 0</span></span>` },
      { x: 597, w: 150, c: html`<span class="info">${ic("iinfo")}<span>展示 5 个消息中的 0 个</span></span>` },
      { x: 697.5, w: 21, c: html`<span class="btn">${ic("ifilter", 14)}</span>` },
      sep(712),
      { x: 793, w: 148, c: html`<span class="combo"><span>生成 + IntelliSense</span>${caret()}</span>` },
      { x: 1084, w: 194, c: html`<span class="search" style="width:100%;height:21px"><span>搜索错误列表</span><span class="sb">${ic("mag", 14)}${caret()}</span></span>` },
    ];
    return html`<div class="center">
      <div class="dtabs">
        <div class="dtab on"><span class="tt">IC00.cs [设计]*</span><span class="tb2">${ic("pinh", 12)}${ic("x", 12)}</span></div>
        ${tabs.map((t) => html`<div class="dtab" style="width:${t.w}px">${t.t}</div>`)}
        <span class="dend">${ic("listdown", 13)}${ic("gear", 13)}</span>
      </div>
      <div class="dline"></div>
      <div class="design">
        <div class="form"><span class="h r"></span><span class="h b"></span><span class="h rb"></span></div>
      </div>
      <div class="errs">
        <div class="ehead"><span>错误列表 ...</span><span class="dots"></span><span class="pbtns">${ic("down", 13)}${ic("pin", 14)}${ic("x", 13)}</span></div>
        <div class="ebar">${strip(ebar, 218)}</div>
        <div class="ehdr">
          ${cols.map((c) => html`<div class="col" style="width:${c.w}px">${c.mark ? html`<span class="mk"></span>` : ""}${c.t ? html`<span>${c.t}</span>` : ""}${c.sort ? caretUp("#c8c8c8") : ""}</div>`)}
        </div>
        <div class="ebody"></div>
        <div class="btabs" style="height:20px">
          <span class="active">错误列表 ...</span><span class="out">输出</span>
        </div>
      </div>
    </div>`;
  }

  renderRight() {
    const bar: TB[] = [
      di(14, "sback"), di(35, "sfwd"), di(57, "home"), di(79, "vsdoc"), sep(96), di(110, "clock"), car(125), di(142, "sync"), di(163, "refresh"), di(184, "collapse"), di(205, "pending"), sep(220), di(235, "code"), di(255, "wrench"),
    ];
    return html`<div class="right">
      <div class="sp">
        ${panelHead("解决方案资源管理器")}
        <div class="tb sub">${strip(bar)}</div>
        <div class="search"><span>搜索解决方案资源管理器(Ctrl+;)</span><span class="sb">${ic("mag", 14)}${caret()}</span></div>
        <div class="stree">
          ${tree.map((r) => html`<div class="row ${r.cls ?? ""}">
            <span class="aslot" style="width:${r.x}px;padding-left:${r.ax ?? 0}px">${r.arrow ? tri(r.arrow === "open") : ""}</span>
            ${ic(r.i, 15)}
            <span style="margin-left:${r.tx ?? 7}px">${r.t}</span>
          </div>`)}
        </div>
      </div>
      <div class="props">
        ${panelHead("属性")}
        <div class="pobj"><b>IC00</b><span>System.Windows.Forms.UserControl</span><span class="c">${caret()}</span></div>
        <div class="ptool">
          <span class="pt">${ic("pcat", 14)}</span><span class="pt sel">${ic("paz")}</span><span class="pt sel">${ic("pprop")}</span><span class="pt">${ic("pevt")}</span><span class="psep"></span><span class="pt">${ic("pkey")}</span>
        </div>
        <div class="pgrid">${ic("plus", 12)}<span>(DataBindings)</span><span class="sq"></span></div>
        <div class="pdesc"><b>(ApplicationSettings)</b>将属性设置映射到应用程序配置文件。</div>
      </div>
    </div>`;
  }

  renderStatus() {
    const items: TB[] = [
      di(12, "sready"),
      { x: 39, w: 24, c: html`<span>就绪</span>` },
      di(761, "spos"),
      { x: 792, w: 40, c: html`<span>19 , 19</span>` },
      di(919, "ssize"),
      { x: 958, w: 54, c: html`<span>300 x 232</span>` },
      { x: 1332, w: 12, c: ic("sup", 12) },
      { x: 1393, w: 94, c: html`<span>添加到源代码管理</span>` },
      { x: 1451, w: 8, c: caretUp("#fff") },
      { x: 1480, w: 16, c: html`<span class="bellb">${ic("bell")}<span class="bdg">2</span></span>` },
    ];
    return html`<div class="status">${strip(items)}</div>`;
  }
}
